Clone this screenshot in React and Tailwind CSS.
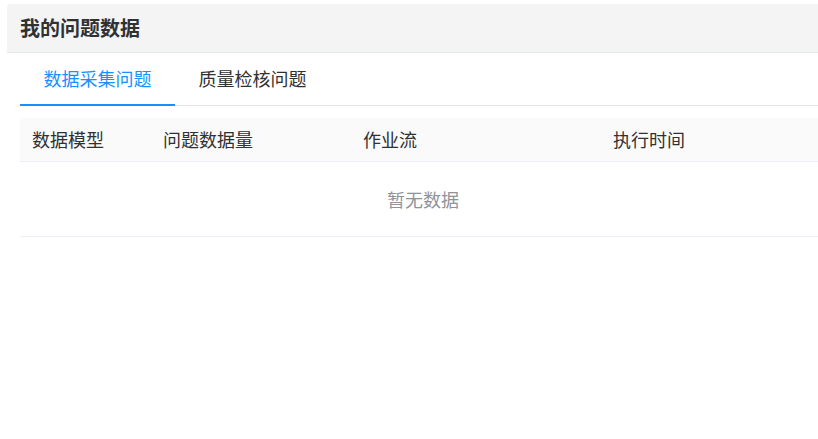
import { useState } from 'react';

const tabs = ['数据采集问题', '质量检核问题'];

const columns = [
  { label: '数据模型', width: 'w-[131px]' },
  { label: '问题数据量', width: 'w-[200px]' },
  { label: '作业流', width: 'w-[250px]' },
  { label: '执行时间', width: 'flex-1' },
];

export default function App() {
  const [active, setActive] = useState(0);

  return (
    <div
      className="w-[818px] h-[439px] overflow-hidden bg-white pl-[7px] pt-[4px]"
      style={{ fontFamily: '"Noto Sans CJK SC", "Microsoft YaHei", sans-serif' }}
    >
      <div className="w-[832px] flex flex-col">
        <div className="h-[49px] flex items-center px-[13px] bg-[#f4f4f5] rounded-tl-[4px] border-b border-[#e4e9f2]">
          <h2 className="text-[20px] font-bold text-[#303133]">我的问题数据</h2>
        </div>

        <div className="px-[13px]">
          <div className="flex border-b border-[#e4e7ed] h-[53px]">
            {tabs.map((tab, i) => (
              <button
                key={tab}
                onClick={() => setActive(i)}
                className={
                  'relative w-[155px] h-full flex items-center justify-center text-[18px] ' +
                  (active === i ? 'text-[#1890ff]' : 'text-[#303133]')
                }
              >
                <span className="-mt-[2px]">{tab}</span>
                {active === i && (
                  <span className="absolute left-0 right-0 -bottom-[1px] h-[2px] bg-[#1890ff]" />
                )}
              </button>
            ))}
          </div>

          <div className="mt-[12px]">
            <div className="flex h-[44px] items-center bg-[#fafafa] border-b border-[#ebeef5]">
              {columns.map((col) => (
                <div key={col.label} className={`${col.width} pl-[12px] text-[18px] text-[#303133]`}>
                  {col.label}
                </div>
              ))}
            </div>
            <div className="h-[75px] flex items-center justify-center border-b border-[#ebeef5]">
              <span className="text-[18px] text-[#909399]">暂无数据</span>
            </div>
          </div>
        </div>
      </div>
    </div>
  );
}
